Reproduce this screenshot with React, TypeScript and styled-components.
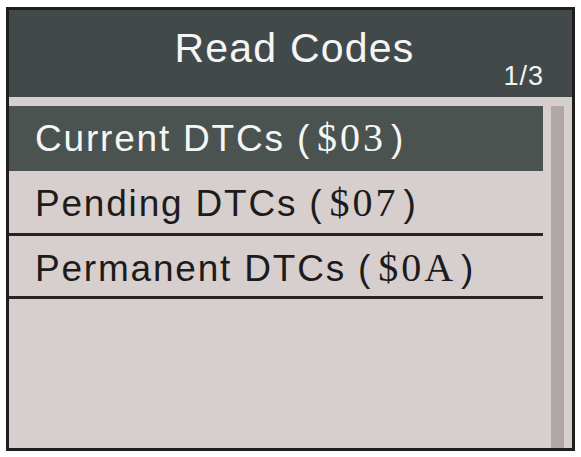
import React from "react";
import styled, { createGlobalStyle } from "styled-components";

const Global = createGlobalStyle`
  html, body { margin: 0; padding: 0; background: #ffffff; }
  body { font-family: "Liberation Sans", Arial, sans-serif; }
`;

const Frame = styled.div`
  box-sizing: border-box;
  margin: 7px 0 0 6px;
  width: 569px;
  height: 444px;
  border: 3px solid #1f1d1d;
  display: flex;
  flex-direction: column;
  background: #d7cfcd;
`;

const Header = styled.header`
  position: relative;
  box-sizing: border-box;
  height: 87px;
  flex: none;
  background: #42494a;
  padding-top: 18px;
  display: flex;
  justify-content: center;
`;

const Title = styled.h1`
  margin: 0 0 0 8px;
  font-family: "Liberation Sans", Arial, sans-serif;
  font-weight: 400;
  font-size: 41px;
  line-height: 1;
  letter-spacing: 1.2px;
  color: #f5f5f5;
`;

const PageIndicator = styled.span`
  position: absolute;
  right: 28px;
  bottom: 7px;
  font-family: "Liberation Sans", Arial, sans-serif;
  font-size: 27px;
  line-height: 1;
  letter-spacing: 1px;
  color: #f2f2f2;
`;

const Body = styled.div`
  flex: 1;
  display: flex;
  gap: 8px;
  padding: 9px 8px 0 0;
  min-height: 0;
`;

const List = styled.ul`
  list-style: none;
  margin: 0;
  padding: 0;
  flex: 1;
  display: flex;
  flex-direction: column;
`;

const Row = styled.li<{ $selected?: boolean; $ruled?: boolean; $h: number }>`
  box-sizing: border-box;
  height: ${(p) => p.$h}px;
  padding: 12px 0 0 26px;
  background: ${(p) => (p.$selected ? "#4a534f" : "transparent")};
  border-bottom: ${(p) => (p.$ruled ? "3px solid #272424" : "none")};
  color: ${(p) => (p.$selected ? "#f6f6f6" : "#1d1b1b")};
  font-family: "Liberation Sans", Arial, sans-serif;
  font-size: 37px;
  line-height: 1;
  letter-spacing: 1.8px;
  white-space: nowrap;
`;

const Code = styled.span`
  font-family: "Liberation Serif", "Times New Roman", serif;
  font-size: 40px;
  letter-spacing: 3px;
  margin: 0 5px 0 6px;
`;

const Scrollbar = styled.div`
  width: 13px;
  flex: none;
  background: #b0a8a6;
`;

const items = [
  { label: "Current DTCs", code: "$03", h: 65 },
  { label: "Pending DTCs", code: "$07", h: 65 },
  { label: "Permanent DTCs", code: "$0A", h: 63 },
];

export default function App() {
  return (
    <>
      <Global />
      <Frame>
        <Header>
          <Title>Read Codes</Title>
          <PageIndicator>1/3</PageIndicator>
        </Header>
        <Body>
          <List>
            {items.map((it, i) => (
              <Row key={it.code} $selected={i === 0} $ruled={i > 0} $h={it.h}>
                {it.label} (<Code>{it.code}</Code>)
              </Row>
            ))}
          </List>
          <Scrollbar />
        </Body>
      </Frame>
    </>
  );
}
